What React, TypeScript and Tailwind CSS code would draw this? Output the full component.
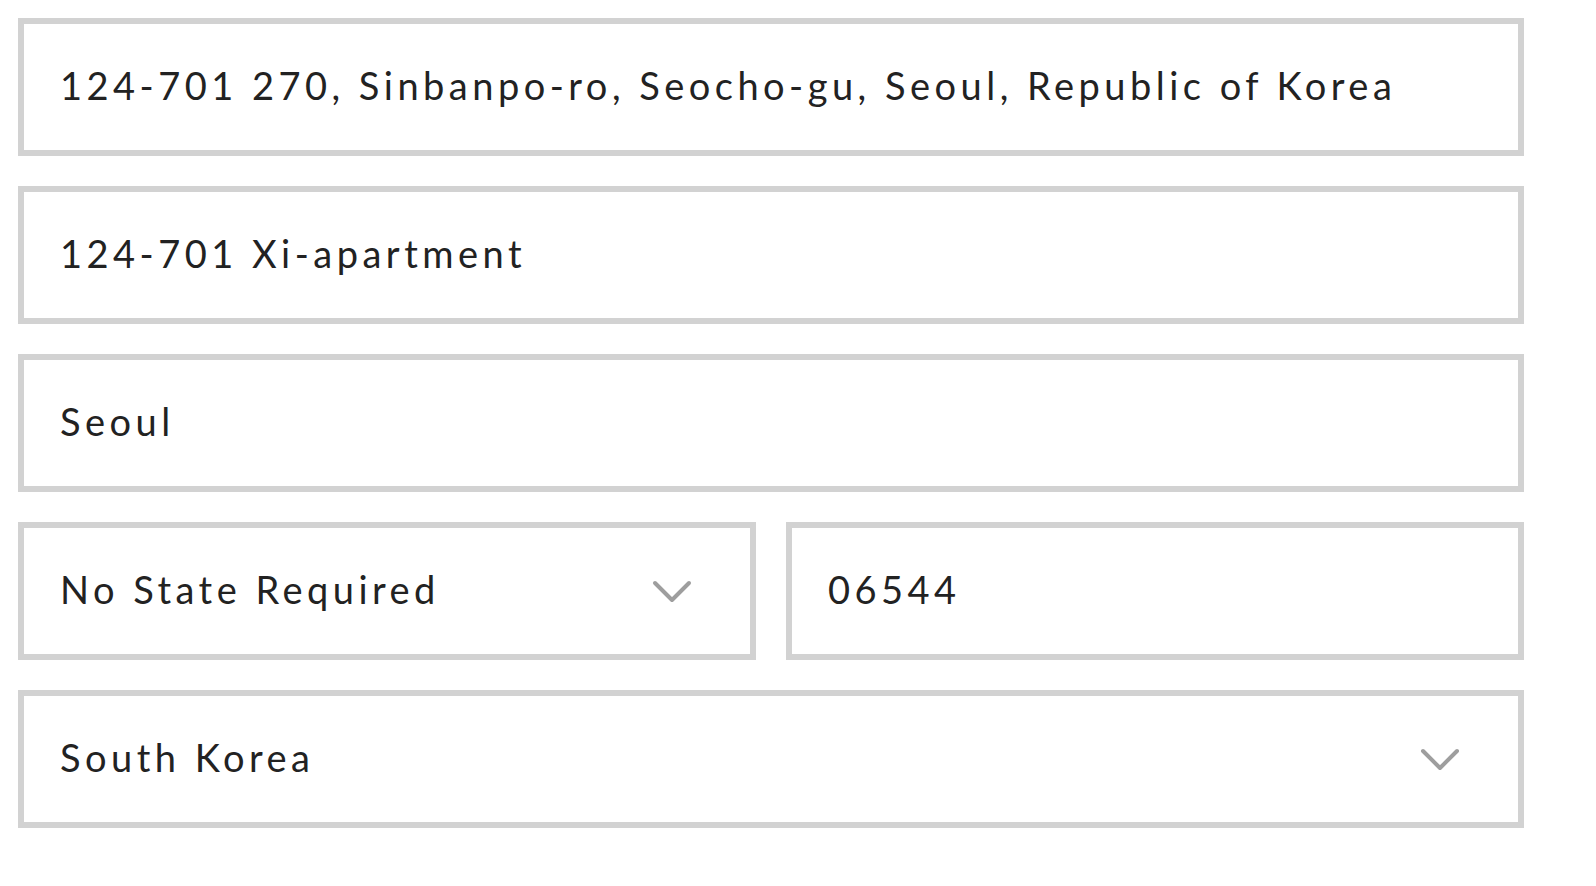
import React from 'react';

const fieldText = "text-[38px] leading-none tracking-[0.118em] text-[#222222] [font-family:Lato,'Open_Sans',sans-serif]";

function Chevron() {
    return (
        <svg width="40" height="26" viewBox="0 0 40 26" fill="none" className="mt-[7px] shrink-0">
            <path d="M3 3 L20 20 L37 3" stroke="#9e9e9e" strokeWidth="4" strokeLinecap="round" strokeLinejoin="round" />
        </svg>
    );
}

function Field({ value, select = false }: { value: string; select?: boolean }) {
    return (
        <div className="flex h-[138px] items-center justify-between border-[6px] border-[#d2d2d2] bg-white pb-[4px] pl-[36px] pr-[58px]">
            <span className={fieldText}>{value}</span>
            {select && <Chevron />}
        </div>
    );
}

export default function App() {
    return (
        <div className="min-h-screen bg-white pt-[18px] pl-[18px]">
            <div className="flex w-[1506px] flex-col gap-[30px]">
                <Field value="124-701 270, Sinbanpo-ro, Seocho-gu, Seoul, Republic of Korea" />
                <Field value="124-701 Xi-apartment" />
                <Field value="Seoul" />
                <div className="grid grid-cols-2 gap-[30px]">
                    <Field value="No State Required" select />
                    <Field value="06544" />
                </div>
                <Field value="South Korea" select />
            </div>
        </div>
    );
}
